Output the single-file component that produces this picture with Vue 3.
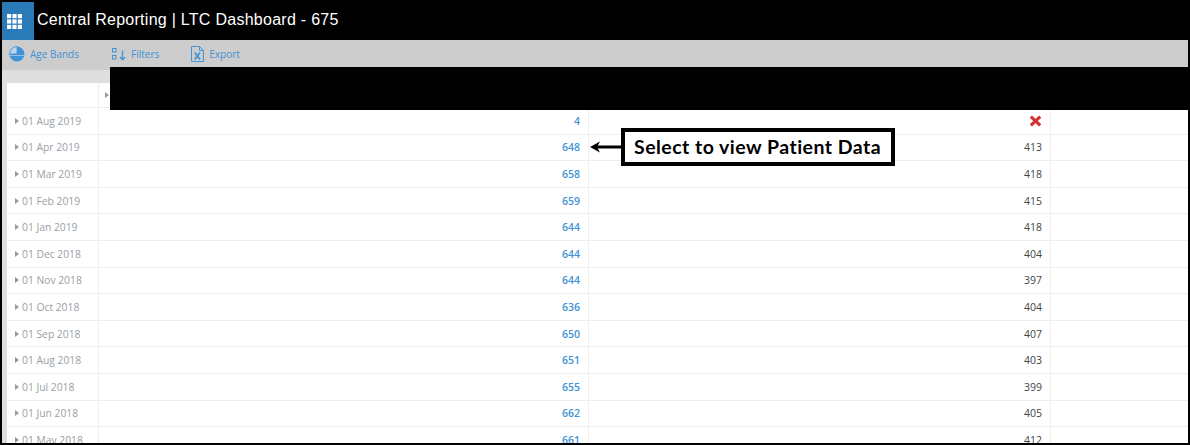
<script setup>
const rows = [
  ['01 Aug 2019', '4', null],
  ['01 Apr 2019', '648', '413'],
  ['01 Mar 2019', '658', '418'],
  ['01 Feb 2019', '659', '415'],
  ['01 Jan 2019', '644', '418'],
  ['01 Dec 2018', '644', '404'],
  ['01 Nov 2018', '644', '397'],
  ['01 Oct 2018', '636', '404'],
  ['01 Sep 2018', '650', '407'],
  ['01 Aug 2018', '651', '403'],
  ['01 Jul 2018', '655', '399'],
  ['01 Jun 2018', '662', '405'],
  ['01 May 2018', '661', '412'],
]
const squares = []
for (let y = 0; y < 3; y++) for (let x = 0; x < 3; x++) squares.push({ x: x * 5.4, y: y * 5.4 })
</script>

<template>
  <div class="page">
    <header class="topbar">
      <div class="apps">
        <svg width="15" height="15" viewBox="0 0 15 15"><rect v-for="(s, i) in squares" :key="i" :x="s.x" :y="s.y" width="4.2" height="4.2" fill="#fff" /></svg>
      </div>
      <h1 class="title">Central Reporting | LTC Dashboard - 675</h1>
    </header>

    <nav class="toolbar">
      <div class="tool age">
        <svg width="16" height="16" viewBox="0 0 16 16">
          <circle cx="8" cy="8" r="7.5" fill="#3f93d6" />
          <path d="M8 8V.5A7.5 7.5 0 0 0 .5 8Z" fill="#bcd3e6" stroke="#3f93d6" stroke-width=".8" />
          <path d="M.7 9.5h14.6" stroke="#a8cde9" stroke-width=".8" />
        </svg>
        <span>Age Bands</span>
      </div>
      <div class="tool filters">
        <svg width="14" height="14" viewBox="0 0 14 14" fill="none" stroke="#3f93d6">
          <rect x=".5" y="1.5" width="3.5" height="3.5" />
          <rect x=".5" y="8.5" width="3.5" height="3.5" />
          <path d="M10.5 3.5v9M8 10l2.5 2.7L13 10" stroke-width="1.3" />
        </svg>
        <span>Filters</span>
      </div>
      <div class="tool export">
        <svg width="13" height="16" viewBox="0 0 13 16" fill="none" stroke="#3f93d6">
          <path d="M.5.5h8l4 4v11H.5Z" />
          <path d="M8.5.5v4h4" />
          <path d="M3.7 6.5l5.3 7M9 6.5l-5.3 7" stroke-width="1.8" />
        </svg>
        <span>Export</span>
      </div>
    </nav>

    <section class="grid-area">
      <div class="grid-head">
        <div class="head-first"></div>
        <div class="head-second"><i class="caret"></i></div>
      </div>
      <div class="row" v-for="r in rows" :key="r[0]">
        <div class="cell date"><i class="caret"></i>{{ r[0] }}</div>
        <div class="cell link">{{ r[1] }}</div>
        <div class="cell num">
          <svg v-if="!r[2]" class="cross" width="13" height="12" viewBox="0 0 13 12"><path d="M1.8 1.600l9.400 8.800M11.200 1.600l-9.400 8.800" stroke="#d33030" stroke-width="3.200" /></svg>
          <template v-else>{{ r[2] }}</template>
        </div>
        <div class="cell last"></div>
      </div>
    </section>

    <div class="redaction"></div>
    <div class="callout">
      <svg class="arrow" width="32" height="12" viewBox="0 0 32 12"><path d="M32 6H6" stroke="#000" stroke-width="3" /><path d="M0 6l10-5.500-3 5.500 3 5.500Z" fill="#000" /></svg>
      <div class="callout-box">Select to view Patient Data</div>
    </div>
  </div>
</template>

<style>
html, body { margin: 0; padding: 0; background: #000; }
</style>

<style scoped>
.page {
  position: relative;
  box-sizing: border-box;
  width: 1190px;
  height: 445px;
  overflow: hidden;
  background: #000;
  border-right: 2px solid #000;
  border-bottom: 2px solid #000;
  border-left: 2px solid #000;
  font-family: "Open Sans", "Liberation Sans", sans-serif;
}
.topbar {
  display: flex;
  align-items: center;
  height: 40px;
  background: #000;
}
.apps {
  box-sizing: border-box;
  display: flex;
  align-items: center;
  justify-content: center;
  width: 32px;
  height: 38px;
  margin-top: 2px;
  padding-right: 7px;
  background: #2a7ab8;
}
.title {
  margin: 0 0 0 3px;
  font-family: "Liberation Sans", Arial, sans-serif;
  font-size: 16px;
  font-weight: 400;
  color: #fff;
  letter-spacing: .27px;
}
.toolbar {
  box-sizing: border-box;
  display: flex;
  align-items: center;
  height: 30px;
  padding-bottom: 3px;
  background: #cdcdcd;
  font-size: 10px;
  color: #3f93d6;
}
.tool { display: flex; align-items: center; }
.age { margin-left: 7px; gap: 5px; }
.filters { margin-left: 33px; gap: 5px; }
.export { margin-left: 32px; gap: 5px; }
.grid-area {
  box-sizing: border-box;
  height: 373px;
  overflow: hidden;
  background: #dedede;
  padding: 13px 0 0 5px;
}
.grid-head { display: flex; height: 24px; background: #fff; }
.head-first { width: 91px; border-right: 1px solid #eee; }
.head-second { display: flex; align-items: center; padding-left: 6px; }
.row {
  display: grid;
  grid-template-columns: 92px 490px 462px 1fr;
  height: 26.600px;
  box-sizing: border-box;
  background: #fff;
  border-top: 1px solid #eee;
  font-size: 10.500px;
}
.cell {
  display: flex;
  align-items: center;
  box-sizing: border-box;
  border-right: 1px solid #eee;
}
.date { color: #9aa0a6; padding-left: 8px; font-size: 10.300px; }
.caret {
  display: inline-block;
  width: 0;
  height: 0;
  margin-right: 3px;
  border-top: 3.500px solid transparent;
  border-bottom: 3.500px solid transparent;
  border-left: 4px solid #999;
}
.link, .num { justify-content: flex-end; padding-right: 8px; }
.link { color: #3f93d6; font-weight: 600; }
.num { color: #444; }
.last { border-right: 0; }
.redaction {
  position: absolute;
  left: 108px;
  top: 67px;
  right: 0;
  height: 43px;
  background: #000;
}
.callout {
  position: absolute;
  left: 588px;
  top: 128px;
  display: flex;
  align-items: center;
}
.arrow { display: block; margin-right: -1px; }
.callout-box {
  box-sizing: border-box;
  width: 274px;
  height: 38px;
  line-height: 30px;
  padding-left: 9px;
  background: #fff;
  border: 4px solid #000;
  font-family: Lato, "Liberation Sans", sans-serif;
  font-size: 19.500px;
  letter-spacing: .47px;
  font-weight: 700;
  color: #000;
  white-space: nowrap;
}
</style>
